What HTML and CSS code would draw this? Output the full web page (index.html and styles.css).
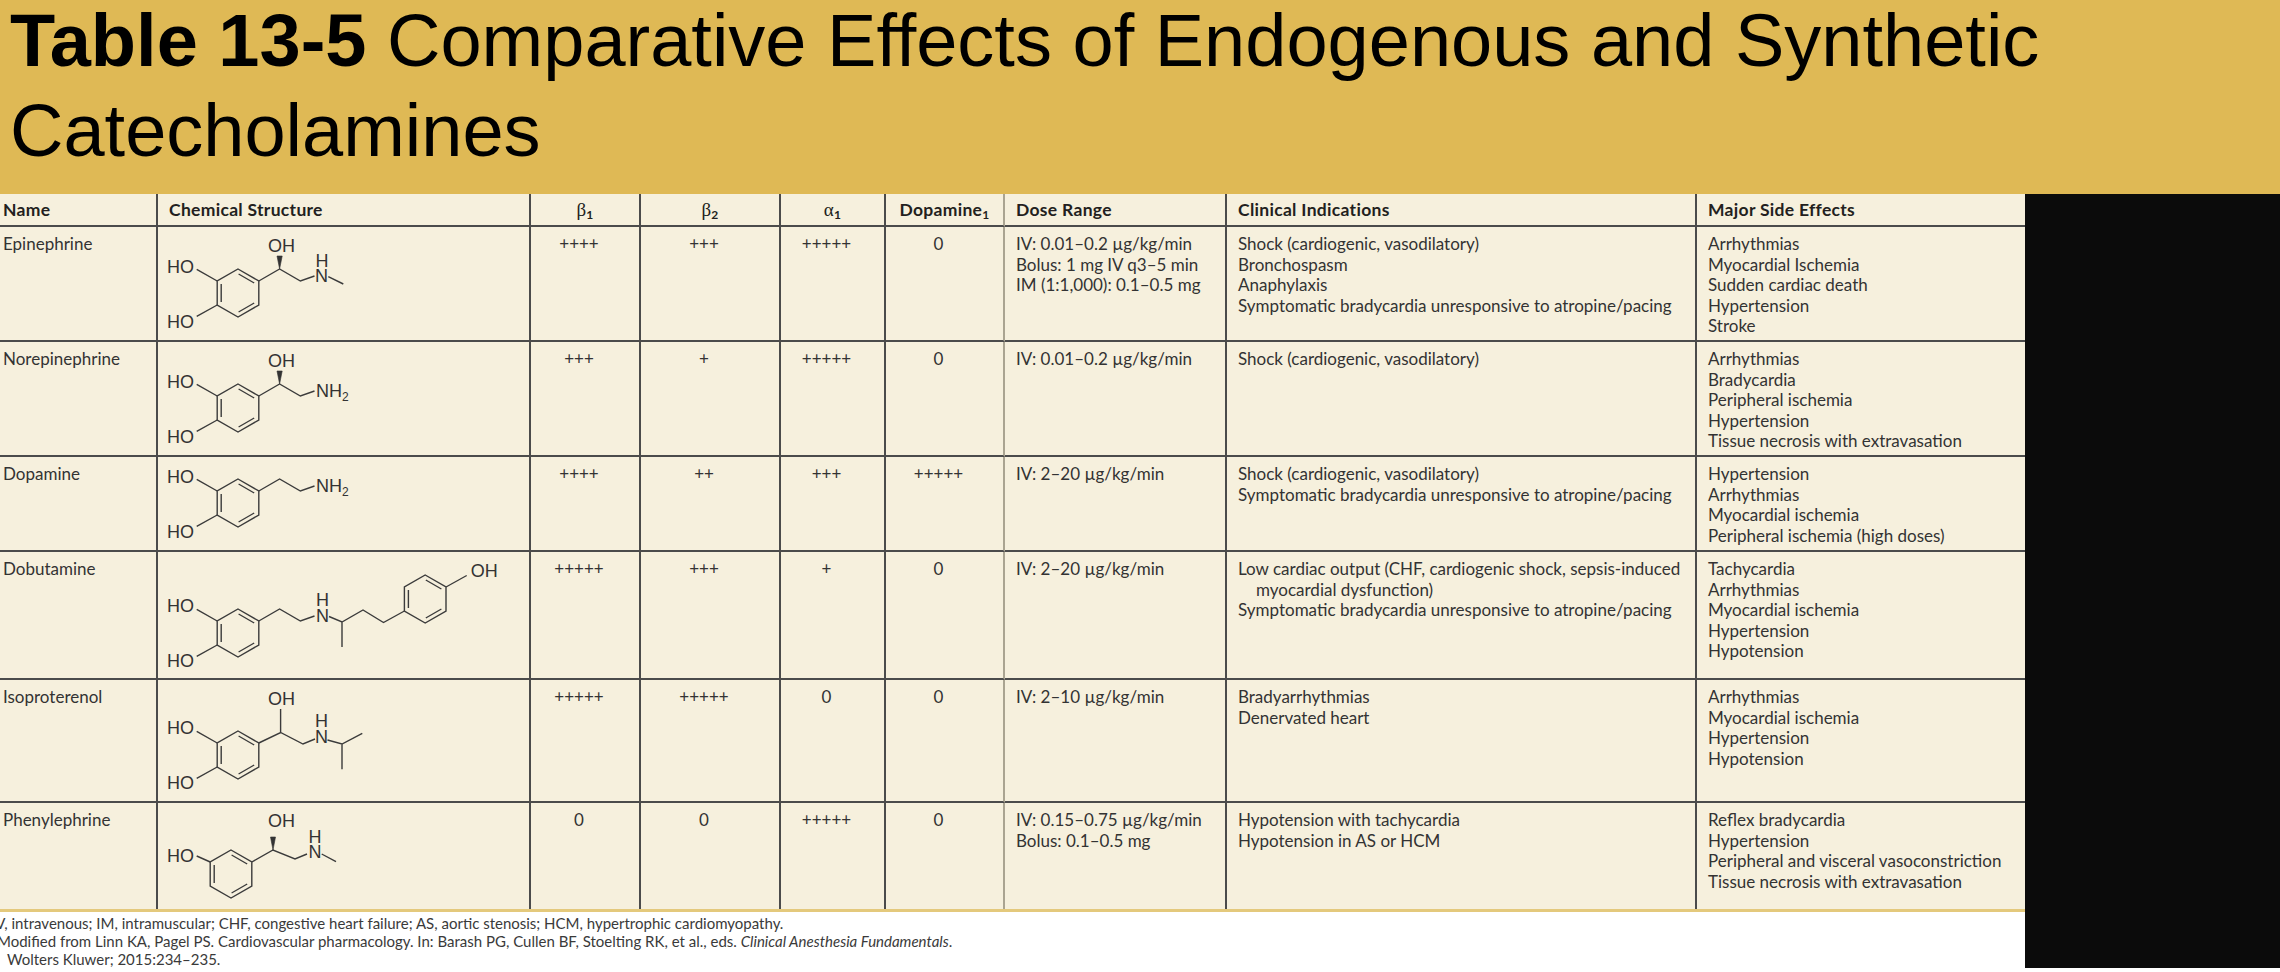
FILE: index.html
```html
<!DOCTYPE html>
<html lang="en">
<head>
<meta charset="utf-8">
<title>Table 13-5 Comparative Effects of Endogenous and Synthetic Catecholamines</title>
<link rel="stylesheet" href="styles.css">
</head>
<body>
<header class="title-bar">
  <h1 class="title"><b>Table 13-5</b> Comparative Effects of Endogenous and Synthetic Catecholamines</h1>
</header>
<div class="content">
  <div class="main">
    <div class="grid">
      <!-- header -->
      <div class="c h name">Name</div>
      <div class="c h">Chemical Structure</div>
      <div class="c h num"><span class="sym">β</span><sub>1</sub></div>
      <div class="c h num"><span class="sym">β</span><sub>2</sub></div>
      <div class="c h num"><span class="sym">α</span><sub>1</sub></div>
      <div class="c h num">Dopamine<sub>1</sub></div>
      <div class="c h">Dose Range</div>
      <div class="c h">Clinical Indications</div>
      <div class="c h">Major Side Effects</div>

      <!-- Epinephrine -->
      <div class="c name">Epinephrine</div>
      <div class="c struct">
        <svg class="mol" width="371" height="113" viewBox="0 0 371 113">
          <g transform="translate(80,66)">
            <polygon points="0,-24 20.8,-12 20.8,12 0,24 -20.8,12 -20.8,-12"/>
            <path d="M-16.8,-9 V9 M0.6,-19 L16.2,-10 M16.2,10 L0.6,19"/>
            <path d="M-20.8,-12 L-41.3,-23.7 M-20.8,12 L-41.3,23.3"/>
            <text x="-44" y="-20" text-anchor="end">HO</text>
            <text x="-44" y="35" text-anchor="end">HO</text>
            <path d="M20.8,-12 L41.6,-24 L62.4,-12 L76.5,-17 M90.3,-16.3 L105.3,-9"/>
            <polygon class="wedge" points="41.6,-24 39,-37 44.2,-37"/>
            <text x="30" y="-41">OH</text>
            <text x="83.5" y="-11" text-anchor="middle">N</text>
            <text x="84" y="-26" text-anchor="middle">H</text>
          </g>
        </svg>
      </div>
      <div class="c num">++++</div>
      <div class="c num">+++</div>
      <div class="c num">+++++</div>
      <div class="c num">0</div>
      <div class="c"><div>IV: 0.01–0.2 µg/kg/min</div><div>Bolus: 1 mg IV q3–5 min</div><div>IM (1:1,000): 0.1–0.5 mg</div></div>
      <div class="c"><div>Shock (cardiogenic, vasodilatory)</div><div>Bronchospasm</div><div>Anaphylaxis</div><div>Symptomatic bradycardia unresponsive to atropine/pacing</div></div>
      <div class="c"><div>Arrhythmias</div><div>Myocardial Ischemia</div><div>Sudden cardiac death</div><div>Hypertension</div><div>Stroke</div></div>

      <!-- Norepinephrine -->
      <div class="c name">Norepinephrine</div>
      <div class="c struct">
        <svg class="mol" width="371" height="113" viewBox="0 0 371 113">
          <g transform="translate(80,66)">
            <polygon points="0,-24 20.8,-12 20.8,12 0,24 -20.8,12 -20.8,-12"/>
            <path d="M-16.8,-9 V9 M0.6,-19 L16.2,-10 M16.2,10 L0.6,19"/>
            <path d="M-20.8,-12 L-41.3,-23.7 M-20.8,12 L-41.3,23.3"/>
            <text x="-44" y="-20" text-anchor="end">HO</text>
            <text x="-44" y="35" text-anchor="end">HO</text>
            <path d="M20.8,-12 L41.6,-24 L62.4,-12 L76.5,-17"/>
            <polygon class="wedge" points="41.6,-24 39,-37 44.2,-37"/>
            <text x="30" y="-41">OH</text>
            <text x="78" y="-11">NH<tspan class="subs" dy="4">2</tspan></text>
          </g>
        </svg>
      </div>
      <div class="c num">+++</div>
      <div class="c num">+</div>
      <div class="c num">+++++</div>
      <div class="c num">0</div>
      <div class="c"><div>IV: 0.01–0.2 µg/kg/min</div></div>
      <div class="c"><div>Shock (cardiogenic, vasodilatory)</div></div>
      <div class="c"><div>Arrhythmias</div><div>Bradycardia</div><div>Peripheral ischemia</div><div>Hypertension</div><div>Tissue necrosis with extravasation</div></div>

      <!-- Dopamine -->
      <div class="c name">Dopamine</div>
      <div class="c struct">
        <svg class="mol" width="371" height="93" viewBox="0 0 371 93">
          <g transform="translate(80,46)">
            <polygon points="0,-24 20.8,-12 20.8,12 0,24 -20.8,12 -20.8,-12"/>
            <path d="M-16.8,-9 V9 M0.6,-19 L16.2,-10 M16.2,10 L0.6,19"/>
            <path d="M-20.8,-12 L-41.3,-23.7 M-20.8,12 L-41.3,23.3"/>
            <text x="-44" y="-20" text-anchor="end">HO</text>
            <text x="-44" y="35" text-anchor="end">HO</text>
            <path d="M20.8,-12 L41.6,-24 L62.4,-12 L76.5,-17"/>
            <text x="78" y="-11">NH<tspan class="subs" dy="4">2</tspan></text>
          </g>
        </svg>
      </div>
      <div class="c num">++++</div>
      <div class="c num">++</div>
      <div class="c num">+++</div>
      <div class="c num">+++++</div>
      <div class="c"><div>IV: 2–20 µg/kg/min</div></div>
      <div class="c"><div>Shock (cardiogenic, vasodilatory)</div><div>Symptomatic bradycardia unresponsive to atropine/pacing</div></div>
      <div class="c"><div>Hypertension</div><div>Arrhythmias</div><div>Myocardial ischemia</div><div>Peripheral ischemia (high doses)</div></div>

      <!-- Dobutamine -->
      <div class="c name">Dobutamine</div>
      <div class="c struct">
        <svg class="mol" width="371" height="126" viewBox="0 0 371 126">
          <g transform="translate(80,81)">
            <polygon points="0,-24 20.8,-12 20.8,12 0,24 -20.8,12 -20.8,-12"/>
            <path d="M-16.8,-9 V9 M0.6,-19 L16.2,-10 M16.2,10 L0.6,19"/>
            <path d="M-20.8,-12 L-41.3,-23.7 M-20.8,12 L-41.3,23.3"/>
            <text x="-44" y="-21" text-anchor="end">HO</text>
            <text x="-44" y="34" text-anchor="end">HO</text>
            <path d="M20.8,-12 L41.6,-24 L62.4,-12 L76.5,-17 M91,-16.5 L104,-11 L125,-23 L145.5,-10.5 L166.4,-22 M104,-11 V14"/>
            <text x="84.5" y="-11.5" text-anchor="middle">N</text>
            <text x="84.5" y="-27" text-anchor="middle">H</text>
            <g transform="translate(187.2,-34)">
              <polygon points="0,-24 20.8,-12 20.8,12 0,24 -20.8,12 -20.8,-12"/>
              <path d="M-16.8,-9 V9 M0.6,-19 L16.2,-10 M16.2,10 L0.6,19"/>
              <path d="M20.8,-12 L41.5,-23.5"/>
              <text x="45.5" y="-22.5">OH</text>
            </g>
          </g>
        </svg>
      </div>
      <div class="c num">+++++</div>
      <div class="c num">+++</div>
      <div class="c num">+</div>
      <div class="c num">0</div>
      <div class="c"><div>IV: 2–20 µg/kg/min</div></div>
      <div class="c"><div class="hang">Low cardiac output (CHF, cardiogenic shock, sepsis-induced<br>myocardial dysfunction)</div><div>Symptomatic bradycardia unresponsive to atropine/pacing</div></div>
      <div class="c"><div>Tachycardia</div><div>Arrhythmias</div><div>Myocardial ischemia</div><div>Hypertension</div><div>Hypotension</div></div>

      <!-- Isoproterenol -->
      <div class="c name">Isoproterenol</div>
      <div class="c struct">
        <svg class="mol" width="371" height="121" viewBox="0 0 371 121">
          <g transform="translate(80,75)">
            <polygon points="0,-24 20.8,-12 20.8,12 0,24 -20.8,12 -20.8,-12"/>
            <path d="M-16.8,-9 V9 M0.6,-19 L16.2,-10 M16.2,10 L0.6,19"/>
            <path d="M-20.8,-12 L-41.3,-23.7 M-20.8,12 L-41.3,23.3"/>
            <text x="-44" y="-21" text-anchor="end">HO</text>
            <text x="-44" y="34" text-anchor="end">HO</text>
            <path d="M20.8,-12 L42.6,-22.5 L65,-11 L77,-16 M89.5,-15 L104,-11 L124.3,-21.7 M104,-11 V14.3 M42.6,-22.5 V-46"/>
            <text x="30" y="-50">OH</text>
            <text x="83.5" y="-12" text-anchor="middle">N</text>
            <text x="83.5" y="-28" text-anchor="middle">H</text>
          </g>
        </svg>
      </div>
      <div class="c num">+++++</div>
      <div class="c num">+++++</div>
      <div class="c num">0</div>
      <div class="c num">0</div>
      <div class="c"><div>IV: 2–10 µg/kg/min</div></div>
      <div class="c"><div>Bradyarrhythmias</div><div>Denervated heart</div></div>
      <div class="c"><div>Arrhythmias</div><div>Myocardial ischemia</div><div>Hypertension</div><div>Hypotension</div></div>

      <!-- Phenylephrine -->
      <div class="c name">Phenylephrine</div>
      <div class="c struct">
        <svg class="mol" width="371" height="106" viewBox="0 0 371 106">
          <g transform="translate(73,71)">
            <polygon points="0,-24 20.8,-12 20.8,12 0,24 -20.8,12 -20.8,-12"/>
            <path d="M-16.8,-9 V9 M0.6,-19 L16.2,-10 M16.2,10 L0.6,19"/>
            <path d="M-20.8,-12 L-34.3,-18"/>
            <text x="-37" y="-12" text-anchor="end">HO</text>
            <path d="M20.8,-12 L42,-24 L64,-15 L76,-20 M90.7,-20 L105,-12.3"/>
            <polygon class="wedge" points="42,-24 39.5,-37 44.5,-37"/>
            <text x="37" y="-47">OH</text>
            <text x="84" y="-16" text-anchor="middle">N</text>
            <text x="84" y="-31" text-anchor="middle">H</text>
          </g>
        </svg>
      </div>
      <div class="c num">0</div>
      <div class="c num">0</div>
      <div class="c num">+++++</div>
      <div class="c num">0</div>
      <div class="c"><div>IV: 0.15–0.75 µg/kg/min</div><div>Bolus: 0.1–0.5 mg</div></div>
      <div class="c"><div>Hypotension with tachycardia</div><div>Hypotension in AS or HCM</div></div>
      <div class="c"><div>Reflex bradycardia</div><div>Hypertension</div><div>Peripheral and visceral vasoconstriction</div><div>Tissue necrosis with extravasation</div></div>
    </div>
    <div class="notes">
      <div class="n1">IV, intravenous; IM, intramuscular; CHF, congestive heart failure; AS, aortic stenosis; HCM, hypertrophic cardiomyopathy.</div>
      <div class="n2">Modified from Linn KA, Pagel PS. Cardiovascular pharmacology. In: Barash PG, Cullen BF, Stoelting RK, et al., eds. <i>Clinical Anesthesia Fundamentals</i>.</div>
      <div class="n3">Wolters Kluwer; 2015:234–235.</div>
    </div>
  </div>
  <div class="side"></div>
</div>
</body>
</html>
```

FILE: styles.css
```css
* {
  box-sizing: border-box;
}

body {
  margin: 0;
  background: #ffffff;
  font-family: Lato, "Open Sans", sans-serif;
  overflow: hidden;
}

.title-bar {
  background: #dfb955;
  height: 194px;
  padding-left: 10px;
  overflow: hidden;
}

.title {
  margin: -4px 0 0;
  font-family: "Liberation Sans", Arial, sans-serif;
  font-weight: 400;
  font-size: 74px;
  line-height: 90px;
  color: #000000;
}

.title b {
  font-weight: 700;
}

.content {
  display: flex;
  align-items: flex-start;
}

.main {
  width: 2025px;
  flex: none;
}

.side {
  width: 255px;
  height: 774px;
  flex: none;
  background: #0b0b0b;
}

.grid {
  display: grid;
  grid-template-columns: 158px 373px 110px 140px 105px 119px 222px 470px 328px;
  background: #f6f0dd;
  color: #333333;
  font-size: 17px;
  line-height: 20.5px;
}

.c {
  border-right: 2px solid #4b4b4b;
  border-bottom: 2px solid #4b4b4b;
  padding: 7px 6px 0 11px;
  white-space: nowrap;
}

.c:nth-child(9n) {
  border-right: none;
}

.c:nth-child(9n+6) {
  border-right-color: #aaa491;
}

.c:nth-last-child(-n+9) {
  border-bottom: none;
}

.h {
  height: 33px;
  padding-top: 6px;
  font-weight: 700;
  font-size: 17.5px;
  letter-spacing: 0.3px;
  color: #231f20;
}

.name {
  padding-left: 3px;
}

.num {
  text-align: center;
  padding-left: 0;
  padding-right: 12px;
}

.h.num {
  padding-right: 0;
}

.sym {
  font-family: "Liberation Serif", "DejaVu Serif", serif;
  font-weight: 400;
  font-size: 19px;
}

sub {
  font-size: 12px;
  line-height: 0;
  vertical-align: -3px;
}

.hang {
  padding-left: 18px;
  text-indent: -18px;
}

.struct {
  padding: 0;
}

.struct svg {
  display: block;
}

.mol {
  stroke: #3b3b3b;
  stroke-width: 1.4;
  fill: none;
}

.mol text {
  fill: #333333;
  stroke: none;
  font-family: "Liberation Sans", Arial, sans-serif;
  font-size: 18px;
}

.mol .subs {
  font-size: 12px;
}

.mol .wedge {
  fill: #333333;
  stroke: #333333;
  stroke-width: 0.6;
}

.notes {
  border-top: 3px solid #e4c97c;
  padding-top: 2px;
  font-size: 15px;
  line-height: 18px;
  color: #3a3a3a;
  white-space: nowrap;
}

.n1 {
  margin-left: -9px;
}

.n2 {
  margin-left: -3px;
}

.n3 {
  margin-left: 7px;
}
```
